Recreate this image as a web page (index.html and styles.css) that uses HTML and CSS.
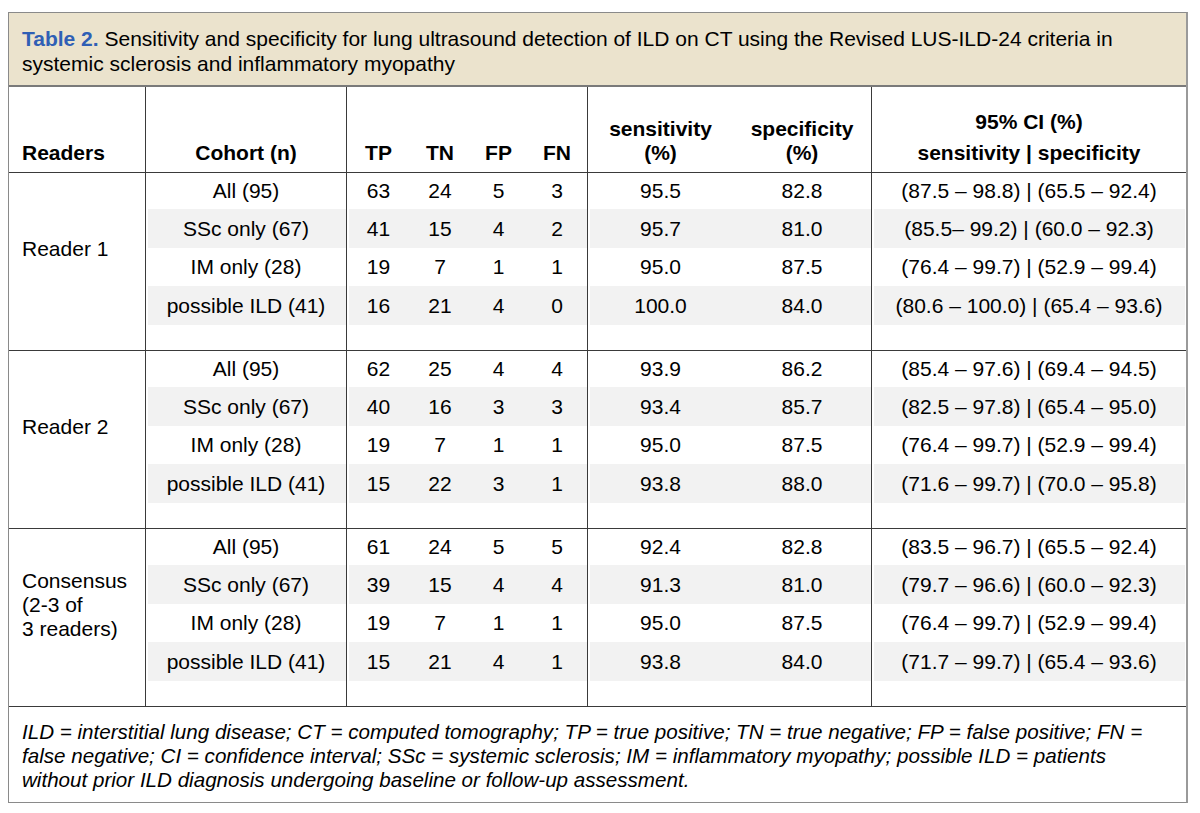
FILE: index.html
```html
<!DOCTYPE html>
<html lang="en">
<head>
<meta charset="utf-8">
<title>Table 2</title>
<link rel="stylesheet" href="styles.css">
</head>
<body>
<div class="box">
  <div class="caption"><span class="label">Table 2.</span> Sensitivity and specificity for lung ultrasound detection of ILD on CT using the Revised LUS-ILD-24 criteria in systemic sclerosis and inflammatory myopathy</div>
  <table class="data">
    <colgroup>
      <col class="c-reader"><col class="c-cohort"><col class="c-tp"><col class="c-tn"><col class="c-fp"><col class="c-fn"><col class="c-sens"><col class="c-spec"><col class="c-ci">
    </colgroup>
    <thead>
      <tr>
        <th class="left">Readers</th>
        <th class="sep">Cohort (n)</th>
        <th class="sep">TP</th>
        <th>TN</th>
        <th>FP</th>
        <th>FN</th>
        <th class="sep">sensitivity<br>(%)</th>
        <th>specificity<br>(%)</th>
        <th class="sep"><div class="ci-top">95% CI (%)</div>sensitivity | specificity</th>
      </tr>
    </thead>
    <tbody>
      <tr class="first">
        <td class="reader" rowspan="5">Reader 1</td>
        <td class="sep">All (95)</td><td class="sep">63</td><td>24</td><td>5</td><td>3</td><td class="sep">95.5</td><td>82.8</td><td class="sep">(87.5 – 98.8) | (65.5 – 92.4)</td>
      </tr>
      <tr class="alt">
        <td class="sep">SSc only (67)</td><td class="sep">41</td><td>15</td><td>4</td><td>2</td><td class="sep">95.7</td><td>81.0</td><td class="sep">(85.5– 99.2) | (60.0 – 92.3)</td>
      </tr>
      <tr>
        <td class="sep">IM only (28)</td><td class="sep">19</td><td>7</td><td>1</td><td>1</td><td class="sep">95.0</td><td>87.5</td><td class="sep">(76.4 – 99.7) | (52.9 – 99.4)</td>
      </tr>
      <tr class="alt">
        <td class="sep">possible ILD (41)</td><td class="sep">16</td><td>21</td><td>4</td><td>0</td><td class="sep">100.0</td><td>84.0</td><td class="sep">(80.6 – 100.0) | (65.4 – 93.6)</td>
      </tr>
      <tr class="empty">
        <td class="sep"></td><td class="sep"></td><td></td><td></td><td></td><td class="sep"></td><td></td><td class="sep"></td>
      </tr>

      <tr class="first">
        <td class="reader" rowspan="5">Reader 2</td>
        <td class="sep">All (95)</td><td class="sep">62</td><td>25</td><td>4</td><td>4</td><td class="sep">93.9</td><td>86.2</td><td class="sep">(85.4 – 97.6) | (69.4 – 94.5)</td>
      </tr>
      <tr class="alt">
        <td class="sep">SSc only (67)</td><td class="sep">40</td><td>16</td><td>3</td><td>3</td><td class="sep">93.4</td><td>85.7</td><td class="sep">(82.5 – 97.8) | (65.4 – 95.0)</td>
      </tr>
      <tr>
        <td class="sep">IM only (28)</td><td class="sep">19</td><td>7</td><td>1</td><td>1</td><td class="sep">95.0</td><td>87.5</td><td class="sep">(76.4 – 99.7) | (52.9 – 99.4)</td>
      </tr>
      <tr class="alt">
        <td class="sep">possible ILD (41)</td><td class="sep">15</td><td>22</td><td>3</td><td>1</td><td class="sep">93.8</td><td>88.0</td><td class="sep">(71.6 – 99.7) | (70.0 – 95.8)</td>
      </tr>
      <tr class="empty">
        <td class="sep"></td><td class="sep"></td><td></td><td></td><td></td><td class="sep"></td><td></td><td class="sep"></td>
      </tr>

      <tr class="first">
        <td class="reader" rowspan="5">Consensus<br>(2-3 of<br>3 readers)</td>
        <td class="sep">All (95)</td><td class="sep">61</td><td>24</td><td>5</td><td>5</td><td class="sep">92.4</td><td>82.8</td><td class="sep">(83.5 – 96.7) | (65.5 – 92.4)</td>
      </tr>
      <tr class="alt">
        <td class="sep">SSc only (67)</td><td class="sep">39</td><td>15</td><td>4</td><td>4</td><td class="sep">91.3</td><td>81.0</td><td class="sep">(79.7 – 96.6) | (60.0 – 92.3)</td>
      </tr>
      <tr>
        <td class="sep">IM only (28)</td><td class="sep">19</td><td>7</td><td>1</td><td>1</td><td class="sep">95.0</td><td>87.5</td><td class="sep">(76.4 – 99.7) | (52.9 – 99.4)</td>
      </tr>
      <tr class="alt">
        <td class="sep">possible ILD (41)</td><td class="sep">15</td><td>21</td><td>4</td><td>1</td><td class="sep">93.8</td><td>84.0</td><td class="sep">(71.7 – 99.7) | (65.4 – 93.6)</td>
      </tr>
      <tr class="empty">
        <td class="sep"></td><td class="sep"></td><td></td><td></td><td></td><td class="sep"></td><td></td><td class="sep"></td>
      </tr>
    </tbody>
  </table>
  <div class="notes">ILD = interstitial lung disease; CT = computed tomography; TP = true positive; TN = true negative; FP = false positive; FN = false negative; CI = confidence interval; SSc = systemic sclerosis; IM = inflammatory myopathy; possible ILD = patients without prior ILD diagnosis undergoing baseline or follow-up assessment.</div>
</div>
</body>
</html>
```

FILE: styles.css
```css
html, body {
  margin: 0;
  padding: 0;
  background: #ffffff;
}
body {
  padding: 12px 0 0 8px;
  font-family: "Liberation Sans", Arial, sans-serif;
  font-size: 21px;
  color: #000000;
}
.box {
  width: 1177px;
  border: 1px solid #8a8a8a;
  border-right: 2px solid #9a9a9a;
  background: #ffffff;
}
.caption {
  background: #ebe3cd;
  padding: 13px 20px 9px 13px;
  line-height: 25px;
  border-bottom: 2px solid #7a7a7a;
}
.label {
  color: #2f5fb5;
  font-weight: bold;
}
.data {
  width: 1177px;
  table-layout: fixed;
  border-collapse: separate;
  border-spacing: 0;
}
.c-reader { width: 136px; }
.c-cohort { width: 201px; }
.c-tp { width: 64px; }
.c-tn { width: 60px; }
.c-fp { width: 57px; }
.c-fn { width: 60px; }
.c-sens { width: 146px; }
.c-spec { width: 138px; }
.c-ci { width: 315px; }

.data th,
.data td {
  padding: 0 2px;
  text-align: center;
  line-height: 24px;
}
.data th {
  height: 85px;
  vertical-align: bottom;
  padding-bottom: 7px;
  box-sizing: border-box;
  font-weight: bold;
}
.data th.left {
  text-align: left;
  padding-left: 13px;
}
.ci-top {
  margin-bottom: 7px;
}
.data .sep {
  border-left: 1px solid #3a3a3a;
}
.data td {
  height: 38px;
  box-sizing: border-box;
  vertical-align: middle;
}
.data tr.first td {
  border-top: 1px solid #3a3a3a;
  height: 37px;
}
.data tr.alt td {
  background: #f2f2f2;
  height: 39px;
}
.data tr.alt td.sep {
  box-shadow: inset 2px 0 0 #ffffff;
}
.data tr.alt td:last-child {
  box-shadow: inset 2px 0 0 #ffffff, inset -1px 0 0 #ffffff;
}
.data tr.empty td {
  height: 25px;
}
.data td.reader {
  text-align: left;
  padding: 0 4px 25px 13px;
  background: #ffffff;
  vertical-align: middle;
}
.notes {
  border-top: 1px solid #3a3a3a;
  font-style: italic;
  font-size: 20.6px;
  line-height: 24px;
  padding: 13px 20px 10px 13px;
}
```
